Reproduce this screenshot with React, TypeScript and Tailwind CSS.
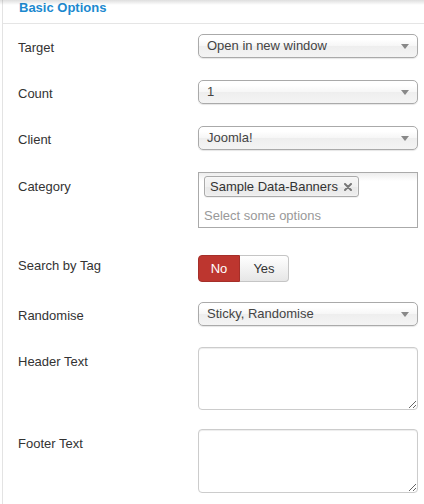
const font = "font-['Liberation_Sans',Arial,sans-serif]";

const SelectBox = ({ value }: { value: string }) => (
  <div className="relative flex h-[24px] w-[220px] items-center rounded-[5px] border border-[#aaa] bg-[linear-gradient(#fff_20%,#f6f6f6_50%,#eee_52%,#f4f4f4_100%)] pl-[8px] text-[13px] text-[#444] shadow-[0_1px_1px_rgba(0,0,0,0.1)]">
    <span>{value}</span>
    <svg
      className="absolute right-[8px] top-[9px]"
      width="8"
      height="5"
      viewBox="0 0 8 5"
    >
      <path d="M0 0H8L4 5Z" fill="#888" />
    </svg>
  </div>
);

type RowProps = {
  label: string;
  labelPad: string;
  spacing: string;
  children: React.ReactNode;
};

const Row = ({ label, labelPad, spacing, children }: RowProps) => (
  <div className={`flex ${spacing}`}>
    <div
      className={`w-[195px] shrink-0 pl-[15px] text-[13px] leading-[18px] text-[#333] ${labelPad}`}
    >
      {label}
    </div>
    {children}
  </div>
);

export default function App() {
  return (
    <div className={`relative min-h-[504px] w-[424px] bg-white ${font}`}>
      <div className="pointer-events-none absolute left-0 top-0 h-[5px] w-full bg-[linear-gradient(rgba(0,0,0,0.13),rgba(0,0,0,0))]" />
      <div className="ml-[2px] min-h-[504px] border-l border-[#e3e3e3] pb-[10px]">
        <div className="h-[24px] border-b border-[#e5e5e5] pl-[16px] text-[13px] font-bold leading-[16px] text-[#1c89cf]">
          Basic Options
        </div>

        <Row label="Target" labelPad="pt-[5px]" spacing="mt-[10px]">
          <SelectBox value="Open in new window" />
        </Row>

        <Row label="Count" labelPad="pt-[5px]" spacing="mt-[22px]">
          <SelectBox value="1" />
        </Row>

        <Row label="Client" labelPad="pt-[5px]" spacing="mt-[22px]">
          <SelectBox value="Joomla!" />
        </Row>

        <Row label="Category" labelPad="pt-[6px]" spacing="mt-[22px]">
          <div className="flex h-[56px] w-[220px] flex-col items-start border border-[#aaa] bg-[linear-gradient(#eee_1%,#fff_15%)] px-[5px] pt-[3px] text-[13px]">
            <div className="flex h-[21px] items-center gap-[6px] rounded-[3px] border border-[#aaa] bg-[linear-gradient(#f4f4f4_20%,#f0f0f0_50%,#e8e8e8_52%,#eee_100%)] pl-[5px] pr-[6px] text-[#333] shadow-[0_0_2px_white_inset,0_1px_0_rgba(0,0,0,0.05)]">
              <span>Sample Data-Banners</span>
              <svg width="8" height="8" viewBox="0 0 8 8">
                <path
                  d="M1 1L7 7M7 1L1 7"
                  stroke="#777"
                  strokeWidth="2"
                  strokeLinecap="round"
                />
              </svg>
            </div>
            <div className="mt-[9px] text-[#999]">Select some options</div>
          </div>
        </Row>

        <Row label="Search by Tag" labelPad="pt-[2px]" spacing="mt-[27px]">
          <div className="flex h-[27px] text-[13px]">
            <div className="flex w-[42px] items-center justify-center rounded-l-[4px] border border-[#a52f29] bg-[#bd362f] text-white">
              No
            </div>
            <div className="flex w-[49px] items-center justify-center rounded-r-[4px] border border-l-0 border-[#c5c5c5] bg-[linear-gradient(#fff,#e6e6e6)] text-[#333] shadow-[inset_0_1px_0_rgba(255,255,255,0.2)]">
              Yes
            </div>
          </div>
        </Row>

        <Row label="Randomise" labelPad="pt-[5px]" spacing="mt-[20px]">
          <SelectBox value="Sticky, Randomise" />
        </Row>

        <Row label="Header Text" labelPad="pt-[6px]" spacing="mt-[21px]">
          <textarea className="h-[63px] w-[220px] rounded-[4px] border border-[#ccc] shadow-[inset_0_1px_1px_rgba(0,0,0,0.075)] outline-none" />
        </Row>

        <Row label="Footer Text" labelPad="pt-[6px]" spacing="mt-[19px]">
          <textarea className="h-[64px] w-[220px] rounded-[4px] border border-[#ccc] shadow-[inset_0_1px_1px_rgba(0,0,0,0.075)] outline-none" />
        </Row>
      </div>
    </div>
  );
}
